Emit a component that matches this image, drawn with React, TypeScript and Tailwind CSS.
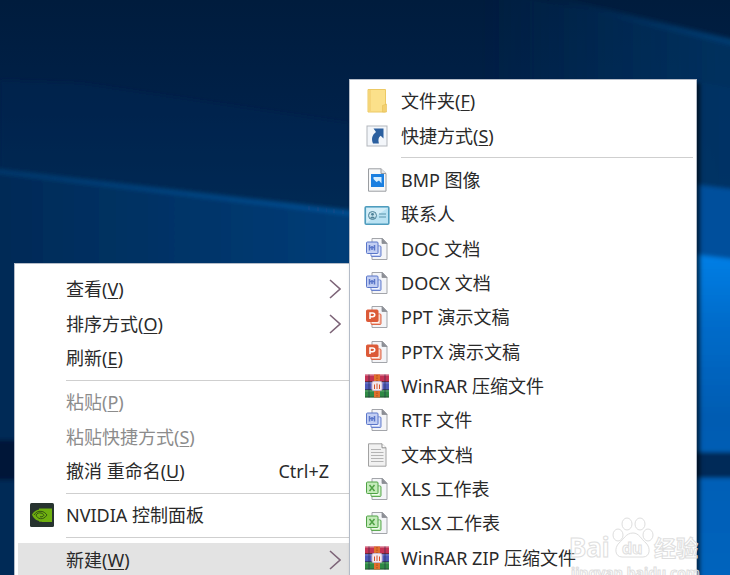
import type { ReactNode } from "react";
import clsx from "clsx";

type Item =
  | { type: "separator" }
  | {
      type: "item";
      label: string;
      accel?: string;
      icon?: ReactNode;
      shortcut?: string;
      submenu?: boolean;
      disabled?: boolean;
      active?: boolean;
    };

function FolderIcon() {
  return (
    <svg viewBox="0 0 24 24" className="size-6" aria-hidden="true">
      <path d="M3 .5h17.500v22.500H3z" fill="#fbe08a" stroke="#ecc964" />
      <path d="M5 1v22" stroke="#f5d478" strokeWidth="2" />
      <path d="M17.500 16.500l4-1.500v8h-4z" fill="#f3d070" stroke="#e6bf58" strokeWidth=".6" />
    </svg>
  );
}

function ShortcutIcon() {
  return (
    <svg viewBox="0 0 24 24" className="size-6" aria-hidden="true">
      <rect x="2" y="2" width="20" height="20" fill="#f3f6fa" stroke="#b3b7bd" />
      <path
        d="M8.500 4.500h10v10l-2.800-2.800c-2.200 1.600-2.800 3.600-1.800 7.800H8c-2-5-.8-8.500 3-11.500z"
        fill="#2b5f9f"
      />
    </svg>
  );
}

function BitmapIcon() {
  return (
    <svg viewBox="0 0 24 24" className="size-6" aria-hidden="true">
      <path d="M3.500.8h12.500l5 4.700v17.700h-17.500z" fill="#f7f8f9" stroke="#9a9da1" />
      <path d="M16 .8v4.700h5" fill="#e3e5e7" stroke="#9a9da1" />
      <rect x="6" y="6" width="13" height="13" fill="#1b7fe0" />
      <path d="M8.500 9h8v6.500l-2.500-3-2.500 1.500-3-3z" fill="#d5eeff" />
    </svg>
  );
}

function ContactIcon() {
  return (
    <svg viewBox="0 0 26 24" className="h-6 w-[26px]" aria-hidden="true">
      <rect x="1.200" y="4.700" width="23.600" height="17.600" rx="1" fill="#b9e2f3" stroke="#4f9cbd" strokeWidth="1.600" />
      <path d="M2.500 21V6h21z" fill="#e0f4fb" opacity=".7" />
      <circle cx="8.500" cy="13.500" r="4" fill="#c6e3ee" stroke="#4d8299" />
      <circle cx="8.500" cy="12.300" r="1.400" fill="#4d8299" />
      <path d="M6 16.500c.5-2.800 4.500-2.800 5 0z" fill="#4d8299" />
      <path d="M15 12h7M15 15h7" stroke="#5b93ab" strokeWidth="1.200" />
    </svg>
  );
}

const OFFICE = {
  word: { dark: "#5a76c9", light: "#c3cff3", glyph: "M4.500 8v5.500M9.500 8v5.500M4.500 10.500h5M7 9v4" },
  ppt: { dark: "#dc5a38", light: "#f6bba8", glyph: "M5 14V8h2.500c3 0 3 3.700 0 3.700H5" },
  excel: { dark: "#4fa244", light: "#c4ebba", glyph: "M4.500 8l5 6M9.500 8l-5 6" },
};

function OfficeIcon({ kind }: { kind: keyof typeof OFFICE }) {
  const { dark, light, glyph } = OFFICE[kind];
  return (
    <svg viewBox="0 0 24 24" className="size-6" aria-hidden="true">
      <path d="M7 1.500h10.500l4.500 5v16H7z" fill="#f4f5f8" stroke="#a3a5aa" />
      <path d="M17 1.500v5h5z" fill="#8b8e94" stroke="#8b8e94" strokeWidth=".8" />
      <rect x="6" y="9" width="10" height="10.500" rx="1" fill={light} stroke={dark} strokeWidth=".9" />
      <path d="M14 9v8.500H6.500" fill="none" stroke="#fff" strokeWidth=".8" />
      <rect
        x="1.500"
        y="5"
        width="11.500"
        height="11.500"
        rx="1"
        fill={kind === "ppt" ? dark : light}
        stroke={dark}
      />
      <path d={glyph} fill="none" stroke={kind === "ppt" ? "#fff" : dark} strokeWidth="1.500" />
    </svg>
  );
}

function RarIcon() {
  return (
    <svg viewBox="0 0 26 24" className="h-6 w-[26px]" aria-hidden="true">
      <rect x="1" y=".5" width="24" height="7.500" fill="#c43355" />
      <rect x="1" y="8" width="24" height="8" fill="#4d58b8" />
      <rect x="1" y="16" width="24" height="7.500" fill="#2f8a45" />
      <path d="M1 1.500h24M1 9h24M1 17h24" stroke="#fff" strokeWidth=".8" opacity=".3" />
      <path d="M1 7.500h24M1 15.500h24M1 23h24" stroke="#222" strokeWidth="1" opacity=".5" />
      <path d="M5 .5v23M21 .5v23" stroke="#1d2247" strokeWidth="1.200" opacity=".45" />
      <rect x="10" y=".5" width="6" height="23" fill="#e0702c" />
      <path d="M13 1v22" stroke="#b4511c" strokeWidth="1.200" strokeDasharray="1.500 1" />
      <rect x="8" y="7.500" width="10" height="9" rx="1.500" fill="#f4e9ee" stroke="#c9b5cf" />
      <path d="M10.500 15v-4.500M13 15V9.500M15.500 15v-4.500" stroke="#d4502a" strokeWidth="1" />
    </svg>
  );
}

function TextIcon() {
  return (
    <svg viewBox="0 0 24 24" className="size-6" aria-hidden="true">
      <path d="M3.500.8h13.500l4 4v18.400h-17.500z" fill="#f1f1f1" stroke="#a2a2a2" />
      <path d="M17 .8v4h4" fill="#fff" stroke="#8e8e8e" />
      <path d="M6 6.500h10M6 9.500h12.500M6 12.500h12.500M6 15.500h12.500M6 18.500h12.500" stroke="#b4b4b4" />
    </svg>
  );
}

function NvidiaIcon() {
  return (
    <svg viewBox="0 0 24 24" className="size-6" aria-hidden="true">
      <rect width="24" height="24" rx="1.500" fill="#27332f" />
      <path d="M9 5.500h13v13.500H9z" fill="#6fb010" />
      <path d="M2 11.500c2-3.500 5-5 8.500-5 4.500 0 7 2.500 9 5.500-2.500 4-5.500 6-9 6-4 0-7-2.500-8.500-6.500z" fill="#6fb010" />
      <path
        d="M4 12c1.500-2.500 4-4 7-3.700 3 .3 4.700 2 6 3.700-2 2.800-4 4-6.500 3.700-2.500-.3-4-2-4.500-3.700 1.200-1.800 3-2.500 5-2 1.500.4 2.300 1.300 3 2.200-1.200 1.500-2.500 2-4 1.500"
        fill="none"
        stroke="#2b4a12"
        strokeWidth=".9"
      />
      <path d="M3 16c2 2.500 5 4 9 3.500" fill="none" stroke="#27332f" strokeWidth="1.500" />
    </svg>
  );
}

const desktopItems: Item[] = [
  { type: "item", label: "查看", accel: "V", submenu: true },
  { type: "item", label: "排序方式", accel: "O", submenu: true },
  { type: "item", label: "刷新", accel: "E" },
  { type: "separator" },
  { type: "item", label: "粘贴", accel: "P", disabled: true },
  { type: "item", label: "粘贴快捷方式", accel: "S", disabled: true },
  { type: "item", label: "撤消 重命名", accel: "U", shortcut: "Ctrl+Z" },
  { type: "separator" },
  { type: "item", label: "NVIDIA 控制面板", icon: <NvidiaIcon /> },
  { type: "separator" },
  { type: "item", label: "新建", accel: "W", submenu: true, active: true },
];

const newItems: Item[] = [
  { type: "item", label: "文件夹", accel: "F", icon: <FolderIcon /> },
  { type: "item", label: "快捷方式", accel: "S", icon: <ShortcutIcon /> },
  { type: "separator" },
  { type: "item", label: "BMP 图像", icon: <BitmapIcon /> },
  { type: "item", label: "联系人", icon: <ContactIcon /> },
  { type: "item", label: "DOC 文档", icon: <OfficeIcon kind="word" /> },
  { type: "item", label: "DOCX 文档", icon: <OfficeIcon kind="word" /> },
  { type: "item", label: "PPT 演示文稿", icon: <OfficeIcon kind="ppt" /> },
  { type: "item", label: "PPTX 演示文稿", icon: <OfficeIcon kind="ppt" /> },
  { type: "item", label: "WinRAR 压缩文件", icon: <RarIcon /> },
  { type: "item", label: "RTF 文件", icon: <OfficeIcon kind="word" /> },
  { type: "item", label: "文本文档", icon: <TextIcon /> },
  { type: "item", label: "XLS 工作表", icon: <OfficeIcon kind="excel" /> },
  { type: "item", label: "XLSX 工作表", icon: <OfficeIcon kind="excel" /> },
  { type: "item", label: "WinRAR ZIP 压缩文件", icon: <RarIcon /> },
];

function Menu({ label, items, className }: { label: string; items: Item[]; className: string }) {
  return (
    <div
      role="menu"
      aria-label={label}
      className={clsx("absolute flex flex-col border border-b-0 border-[#b4bcc8] bg-white pl-[3px]", className)}
    >
      {items.map((item, i) =>
        item.type === "separator" ? (
          <div key={i} role="separator" className="flex h-[10px] shrink-0 items-center pl-12">
            <div className="h-px w-full bg-[#cfcfcf]" />
          </div>
        ) : (
          <button
            key={i}
            type="button"
            role="menuitem"
            disabled={item.disabled}
            className={clsx(
              "flex min-h-8 flex-1 items-center text-left text-lg leading-6 whitespace-nowrap",
              item.disabled ? "text-[#8c8c8c]" : "text-[#2a2a2a]",
              item.active && "bg-[#e3e3e3]",
            )}
          >
            <span className="flex w-12 shrink-0 justify-center">{item.icon}</span>
            <span className="flex-1">
              {item.label}
              {item.accel && (
                <>
                  (<span className="underline decoration-1 underline-offset-2">{item.accel}</span>)
                </>
              )}
            </span>
            {item.shortcut && <span className="pr-5">{item.shortcut}</span>}
            {item.submenu && (
              <svg viewBox="0 0 12 20" className="mr-2 h-5 w-3" aria-hidden="true">
                <path d="M1 1l10 9L1 19" fill="none" stroke="#7d6478" strokeWidth="1.600" />
              </svg>
            )}
          </button>
        ),
      )}
    </div>
  );
}

function Wallpaper() {
  return (
    <svg
      viewBox="0 0 730 575"
      preserveAspectRatio="none"
      className="absolute inset-0 size-full"
      aria-hidden="true"
    >
      <defs>
        <linearGradient id="sky" x1="0" y1="0" x2="0" y2="1">
          <stop offset="0" stopColor="#001c3d" />
          <stop offset=".2" stopColor="#002149" />
          <stop offset=".45" stopColor="#003059" />
          <stop offset="1" stopColor="#00264f" />
        </linearGradient>
        <linearGradient id="beam" x1="0" y1="0" x2="1" y2="0">
          <stop offset="0" stopColor="#002a56" />
          <stop offset=".48" stopColor="#003d78" />
          <stop offset="1" stopColor="#0058a8" />
        </linearGradient>
        <linearGradient id="edge" gradientUnits="userSpaceOnUse" x1="0" y1="0" x2="360" y2="0">
          <stop offset="0" stopColor="#003a70" />
          <stop offset="1" stopColor="#08549c" />
        </linearGradient>
        <linearGradient id="haze" gradientUnits="userSpaceOnUse" x1="480" y1="0" x2="720" y2="0">
          <stop offset="0" stopColor="#003464" stopOpacity="0" />
          <stop offset="1" stopColor="#003464" stopOpacity=".8" />
        </linearGradient>
        <linearGradient id="streak" gradientUnits="userSpaceOnUse" x1="540" y1="0" x2="730" y2="0">
          <stop offset="0" stopColor="#003a6e" stopOpacity="0" />
          <stop offset="1" stopColor="#003e74" stopOpacity=".9" />
        </linearGradient>
        <linearGradient id="glow" x1="0" y1="0" x2="0" y2="1">
          <stop offset="0" stopColor="#007fe6" />
          <stop offset=".2" stopColor="#006dcc" />
          <stop offset=".5" stopColor="#005cb2" />
          <stop offset="1" stopColor="#0064bd" />
        </linearGradient>
        <filter id="soft" x="-5%" y="-20%" width="110%" height="140%">
          <feGaussianBlur stdDeviation="2" />
        </filter>
      </defs>
      <rect width="730" height="575" fill="url(#sky)" />
      <g filter="url(#soft)">
        <path d="M80 83L349 123V220L0 175V80z" fill="#002a52" opacity=".4" />
        <path d="M480-12L740 42V260H690V84H480z" fill="url(#haze)" />
        <path d="M540-4L740 44" stroke="url(#streak)" strokeWidth="6" />
        <path d="M-5 172L360 214 740 260V580H-5z" fill="url(#beam)" />
        <path d="M-5 171L360 214" stroke="url(#edge)" strokeWidth="4" />
        <path d="M690 80L740 90V190L690 184z" fill="#003567" opacity=".7" />
        <path d="M690 184L740 190V262H690z" fill="#00509c" />
        <path d="M690 254L740 260V580H690z" fill="url(#glow)" />
        <rect x="690" y="452" width="50" height="26" fill="#002b58" />
        <rect x="-5" y="440" width="25" height="40" fill="#001637" />
      </g>
    </svg>
  );
}

function Watermark() {
  return (
    <svg viewBox="0 0 140 60" className="absolute right-6 bottom-0 h-[60px] w-[140px]" aria-hidden="true">
      <g fill="#fff" fillOpacity=".4" stroke="#dedede" strokeWidth="1">
        <ellipse cx="52" cy="20" rx="5" ry="6" />
        <ellipse cx="61" cy="9" rx="5" ry="6" />
        <ellipse cx="74" cy="9" rx="5" ry="6" />
        <ellipse cx="82" cy="20" rx="5" ry="6" />
        <path d="M67 18c6 0 8 6 13 10 5 5 4 14-3 14H56c-7 0-8-9-3-14 5-4 7-10 14-10z" />
        <g className="font-['Noto_Sans','Noto_Sans_CJK_SC',sans-serif] font-bold">
          <text x="3" y="42" fontSize="26">Bai</text>
          <text x="56" y="39" fontSize="16">du</text>
          <text x="88" y="41" fontSize="22">经验</text>
          <text x="5" y="63" fontSize="14">jingyan.baidu.com</text>
        </g>
      </g>
    </svg>
  );
}

export default function App() {
  return (
    <main className="relative h-screen overflow-hidden bg-[#002149] font-['Noto_Sans','Noto_Sans_CJK_SC',sans-serif]">
      <Wallpaper />
      <Menu
        label="桌面"
        items={desktopItems}
        className="top-[263px] -bottom-0.5 left-[14px] w-[336px] pt-2"
      />
      <Menu
        label="新建"
        items={newItems}
        className="top-[79px] bottom-0 left-[349px] w-[348px] pt-1 pr-[3px] shadow-[3px_4px_4px_rgba(0,0,0,0.6)]"
      />
      <Watermark />
    </main>
  );
}
